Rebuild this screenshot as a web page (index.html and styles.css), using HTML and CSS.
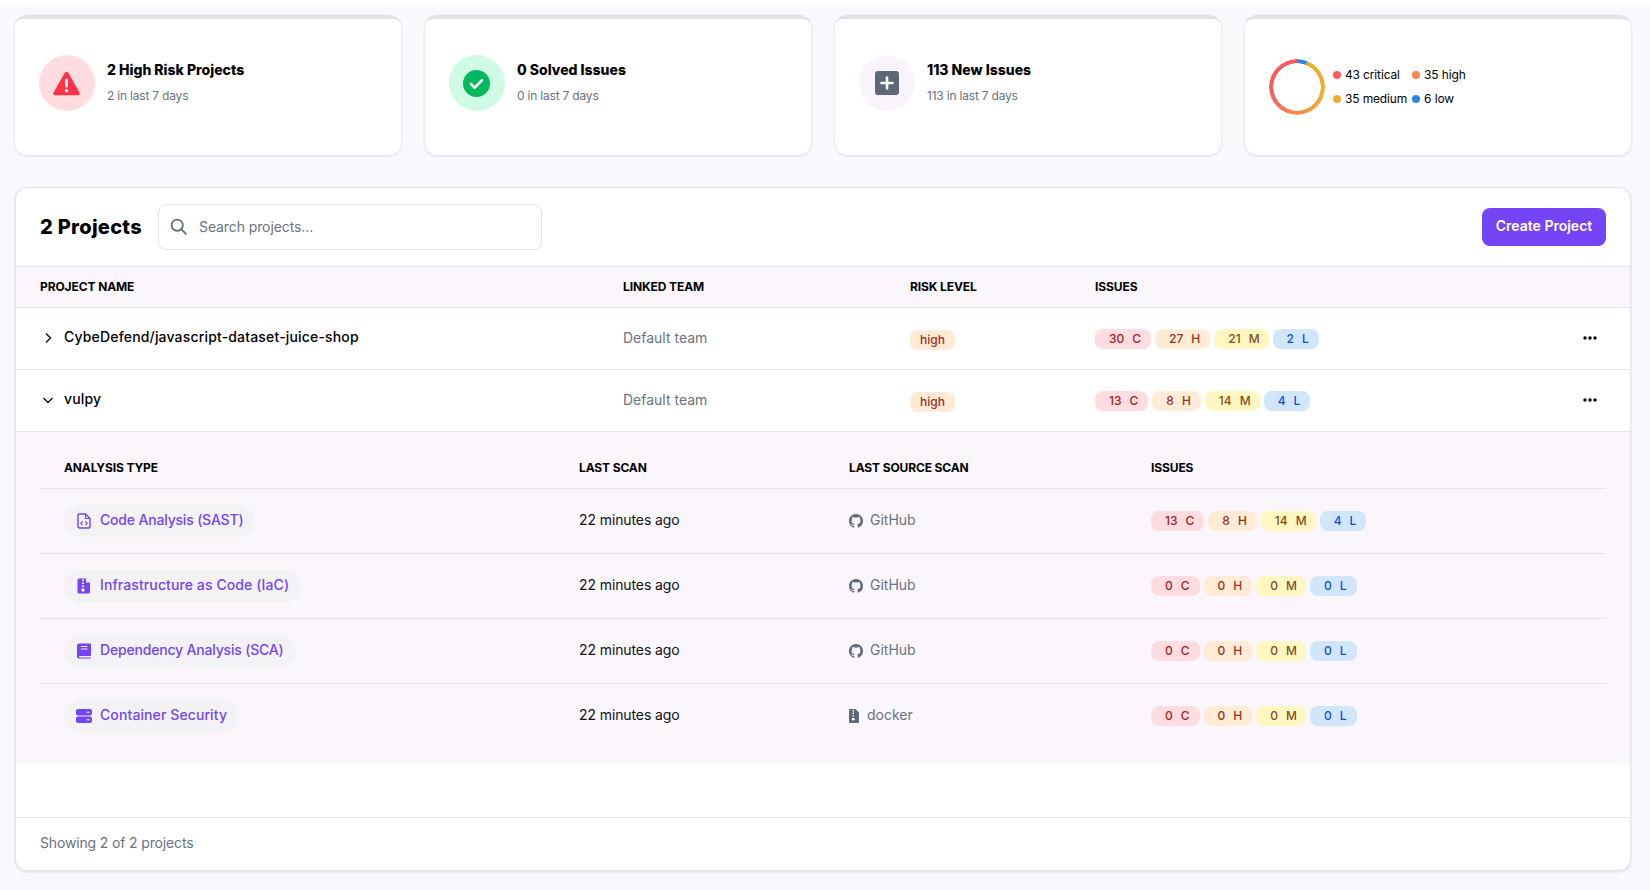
FILE: index.html
```html
<!DOCTYPE html>
<html lang="en">
<head>
<meta charset="utf-8">
<title>Projects</title>
<link rel="stylesheet" href="styles.css">
</head>
<body>
<div class="topband"></div>
<main class="page">
  <section class="stats">
    <article class="stat"><div class="stat-inner">
      <div class="halo halo-red">
        <svg class="ico27" viewBox="0 0 27 24"><path fill="#ff3347" d="M13.500 0.500c.9 0 1.600.5 2 1.200l11 19.200c.8 1.400-.1 2.900-1.700 2.900H2.200C.6 23.800-.3 22.300.5 20.900l11-19.200c.4-.7 1.100-1.200 2-1.200z"/><rect x="12.200" y="7" width="2.600" height="9" rx="1.200" fill="#fff"/><circle cx="13.500" cy="19.200" r="1.600" fill="#fff"/></svg>
      </div>
      <div class="stat-text"><h3>2 High Risk Projects</h3><p>2 in last 7 days</p></div>
    </div></article>
    <article class="stat"><div class="stat-inner">
      <div class="halo halo-green">
        <svg class="ico27" viewBox="0 0 27 27"><circle cx="13.500" cy="13.500" r="13.500" fill="#00b95f"/><path d="M8 14l3.800 3.700L19 10.200" fill="none" stroke="#fff" stroke-width="2.600" stroke-linecap="round" stroke-linejoin="round"/></svg>
      </div>
      <div class="stat-text"><h3>0 Solved Issues</h3><p>0 in last 7 days</p></div>
    </div></article>
    <article class="stat"><div class="stat-inner">
      <div class="halo halo-lilac">
        <svg class="ico24" viewBox="0 0 24 24"><rect width="24" height="24" rx="3" fill="#5d6878"/><path d="M12 6.500v11M6.500 12h11" stroke="#fff" stroke-width="2.600" stroke-linecap="round"/></svg>
      </div>
      <div class="stat-text"><h3>113 New Issues</h3><p>113 in last 7 days</p></div>
    </div></article>
    <article class="stat"><div class="stat-inner stat-chart">
      <div class="donut"></div>
      <ul class="legend">
        <li><i class="dot d-c"></i>43 critical</li>
        <li><i class="dot d-h"></i>35 high</li>
        <li><i class="dot d-m"></i>35 medium</li>
        <li><i class="dot d-l"></i>6 low</li>
      </ul>
    </div></article>
  </section>

  <section class="panel">
    <header class="panel-head">
      <h2>2 Projects</h2>
      <label class="search">
        <svg class="ico-search" viewBox="0 0 16 16"><circle cx="6.800" cy="6.800" r="5.300" fill="none" stroke="#5d6878" stroke-width="1.600"/><path d="M10.800 10.800L15 15" stroke="#5d6878" stroke-width="1.600" stroke-linecap="round"/></svg>
        <span>Search projects...</span>
      </label>
      <button class="create">Create Project</button>
    </header>

    <div class="main-row table-head">
      <div>Project name</div><div>Linked team</div><div>Risk level</div><div>Issues</div>
    </div>

    <div class="main-row project">
      <div class="name"><svg class="chev" viewBox="0 0 12 12"><path d="M4 1.500L8.500 6 4 10.500" fill="none" stroke="#111" stroke-width="1.400"/></svg>CybeDefend/javascript-dataset-juice-shop</div>
      <div class="team">Default team</div>
      <div><span class="risk">high</span></div>
      <div class="issues-cell">
        <div class="badges"><span class="b b-c">30<i>C</i></span><span class="b b-h">27<i>H</i></span><span class="b b-m">21<i>M</i></span><span class="b b-l">2<i>L</i></span></div>
        <svg class="kebab" viewBox="0 0 14 4"><circle cx="2" cy="2" r="1.700"/><circle cx="7" cy="2" r="1.700"/><circle cx="12" cy="2" r="1.700"/></svg>
      </div>
    </div>

    <div class="main-row project">
      <div class="name"><svg class="chev" viewBox="0 0 12 12"><path d="M1.500 4L6 8.500 10.500 4" fill="none" stroke="#111" stroke-width="1.400"/></svg>vulpy</div>
      <div class="team">Default team</div>
      <div><span class="risk">high</span></div>
      <div class="issues-cell">
        <div class="badges"><span class="b b-c">13<i>C</i></span><span class="b b-h">8<i>H</i></span><span class="b b-m">14<i>M</i></span><span class="b b-l">4<i>L</i></span></div>
        <svg class="kebab" viewBox="0 0 14 4"><circle cx="2" cy="2" r="1.700"/><circle cx="7" cy="2" r="1.700"/><circle cx="12" cy="2" r="1.700"/></svg>
      </div>
    </div>

    <div class="sub">
      <div class="sub-row sub-head">
        <div class="first">Analysis type</div><div>Last scan</div><div>Last source scan</div><div>Issues</div>
      </div>

      <div class="sub-row">
        <div class="first"><a class="pill"><svg class="ico16" viewBox="0 0 14 16"><path d="M2.500 1h6L13 5.500V13.500a1.500 1.500 0 0 1-1.500 1.500h-9A1.500 1.500 0 0 1 1 13.500v-11A1.500 1.500 0 0 1 2.500 1z" fill="none" stroke="#7444f5" stroke-width="1.400"/><path d="M8.500 1v4.500H13" fill="none" stroke="#7444f5" stroke-width="1.200"/><path d="M5.600 8.500L3.800 10.300l1.800 1.800M8.400 8.500l1.800 1.800-1.800 1.800" fill="none" stroke="#7444f5" stroke-width="1.100"/></svg><span class="pill-text">Code Analysis (SAST)</span></a></div>
        <div class="scan">22 minutes ago</div>
        <div class="source"><svg class="gh" viewBox="0 0 16 16"><path d="M8 0C3.580 0 0 3.580 0 8c0 3.540 2.290 6.530 5.470 7.590.4.070.55-.17.55-.38 0-.19-.01-.82-.01-1.490-2.010.37-2.530-.49-2.690-.94-.09-.23-.48-.94-.82-1.130-.28-.15-.68-.52-.01-.53.63-.01 1.080.58 1.230.82.72 1.210 1.870.87 2.330.66.070-.52.28-.87.51-1.070-1.780-.2-3.640-.89-3.640-3.950 0-.87.31-1.590.82-2.150-.08-.2-.36-1.020.08-2.120 0 0 .67-.21 2.200.82.64-.18 1.320-.27 2-.27.68 0 1.360.09 2 .27 1.530-1.040 2.200-.82 2.200-.82.44 1.100.16 1.920.08 2.120.51.56.82 1.270.82 2.150 0 3.070-1.870 3.750-3.650 3.950.29.25.54.73.54 1.480 0 1.070-.01 1.930-.01 2.200 0 .21.15.46.55.38A8.013 8.013 0 0 0 16 8c0-4.420-3.580-8-8-8z"/></svg>GitHub</div>
        <div class="badges"><span class="b b-c">13<i>C</i></span><span class="b b-h">8<i>H</i></span><span class="b b-m">14<i>M</i></span><span class="b b-l">4<i>L</i></span></div>
      </div>

      <div class="sub-row">
        <div class="first"><a class="pill"><svg class="ico16" viewBox="0 0 14 16"><path d="M2 0.500h7L13 4.500V14a1.500 1.500 0 0 1-1.500 1.500h-9.500A1.500 1.500 0 0 1 0.500 14V2A1.500 1.500 0 0 1 2 0.500z" fill="#7444f5"/><path d="M9 0.500V4.500h4" fill="#f3f3f5"/><path d="M5 1.500h2v1.500H5zM5 4.500h2V6H5zM5 7.500h2V9H5z" fill="#f3f3f5"/><circle cx="6" cy="12" r="1.700" fill="#f3f3f5"/></svg><span class="pill-text wide">Infrastructure as Code (IaC)</span></a></div>
        <div class="scan">22 minutes ago</div>
        <div class="source"><svg class="gh" viewBox="0 0 16 16"><path d="M8 0C3.580 0 0 3.580 0 8c0 3.540 2.290 6.530 5.470 7.590.4.070.55-.17.55-.38 0-.19-.01-.82-.01-1.490-2.010.37-2.530-.49-2.690-.94-.09-.23-.48-.94-.82-1.130-.28-.15-.68-.52-.01-.53.63-.01 1.080.58 1.230.82.72 1.210 1.870.87 2.330.66.070-.52.28-.87.51-1.070-1.780-.2-3.640-.89-3.640-3.950 0-.87.31-1.590.82-2.150-.08-.2-.36-1.020.08-2.120 0 0 .67-.21 2.200.82.64-.18 1.320-.27 2-.27.68 0 1.360.09 2 .27 1.530-1.040 2.200-.82 2.200-.82.44 1.100.16 1.920.08 2.120.51.56.82 1.270.82 2.150 0 3.070-1.870 3.750-3.650 3.950.29.25.54.73.54 1.480 0 1.070-.01 1.930-.01 2.200 0 .21.15.46.55.38A8.013 8.013 0 0 0 16 8c0-4.420-3.580-8-8-8z"/></svg>GitHub</div>
        <div class="badges"><span class="b b-c">0<i>C</i></span><span class="b b-h">0<i>H</i></span><span class="b b-m">0<i>M</i></span><span class="b b-l">0<i>L</i></span></div>
      </div>

      <div class="sub-row">
        <div class="first"><a class="pill"><svg class="ico16" viewBox="0 0 16 16"><path d="M3 0.500h11a1 1 0 0 1 1 1V12a1 1 0 0 1-1 1H3.500a1 1 0 0 0 0 1.500H15v1H3A2 2 0 0 1 1 13.500V2.500a2 2 0 0 1 2-2z" fill="#7444f5"/><path d="M5 3.500h6.500M5 6h6.500" stroke="#f3f3f5" stroke-width="1.100"/></svg><span class="pill-text">Dependency Analysis (SCA)</span></a></div>
        <div class="scan">22 minutes ago</div>
        <div class="source"><svg class="gh" viewBox="0 0 16 16"><path d="M8 0C3.580 0 0 3.580 0 8c0 3.540 2.290 6.530 5.470 7.590.4.070.55-.17.55-.38 0-.19-.01-.82-.01-1.490-2.010.37-2.530-.49-2.690-.94-.09-.23-.48-.94-.82-1.130-.28-.15-.68-.52-.01-.53.63-.01 1.080.58 1.230.82.72 1.210 1.870.87 2.330.66.070-.52.28-.87.51-1.070-1.780-.2-3.640-.89-3.640-3.950 0-.87.31-1.590.82-2.150-.08-.2-.36-1.020.08-2.120 0 0 .67-.21 2.200.82.64-.18 1.320-.27 2-.27.68 0 1.360.09 2 .27 1.530-1.040 2.200-.82 2.200-.82.44 1.100.16 1.920.08 2.120.51.56.82 1.270.82 2.150 0 3.070-1.870 3.750-3.650 3.950.29.25.54.73.54 1.480 0 1.070-.01 1.930-.01 2.200 0 .21.15.46.55.38A8.013 8.013 0 0 0 16 8c0-4.420-3.580-8-8-8z"/></svg>GitHub</div>
        <div class="badges"><span class="b b-c">0<i>C</i></span><span class="b b-h">0<i>H</i></span><span class="b b-m">0<i>M</i></span><span class="b b-l">0<i>L</i></span></div>
      </div>

      <div class="sub-row last">
        <div class="first"><a class="pill"><svg class="ico16" viewBox="0 0 16 16"><rect y="1" width="16" height="6.400" rx="2" fill="#7444f5"/><rect y="8.600" width="16" height="6.400" rx="2" fill="#7444f5"/><path d="M10.500 4.200h3M10.500 11.800h3" stroke="#f3f3f5" stroke-width="1.100"/></svg><span class="pill-text wide">Container Security</span></a></div>
        <div class="scan">22 minutes ago</div>
        <div class="source"><svg class="zip" viewBox="0 0 10 14"><path d="M1 0h5.500L10 3.500V13a1 1 0 0 1-1 1H1a1 1 0 0 1-1-1V1a1 1 0 0 1 1-1z" fill="#5d6878"/><path d="M3.500 1h1.500v1.500H3.500zM3.500 3.500h1.500V5H3.500zM3.500 6h1.500v1.500H3.500z" fill="#faf8fc"/><circle cx="4.300" cy="10.200" r="1.400" fill="#faf8fc"/></svg>docker</div>
        <div class="badges"><span class="b b-c">0<i>C</i></span><span class="b b-h">0<i>H</i></span><span class="b b-m">0<i>M</i></span><span class="b b-l">0<i>L</i></span></div>
      </div>
    </div>

    <div class="spacer"></div>
    <footer class="panel-foot">Showing 2 of 2 projects</footer>
  </section>
</main>
</body>
</html>
```
FILE: styles.css
```css
* { box-sizing: border-box; }
html, body { margin: 0; padding: 0; }
body {
  background: #faf8fc;
  font-family: "Inter", "Liberation Sans", sans-serif;
  font-size: 14px;
  color: #000;
  overflow: hidden;
}
.topband { height: 7px; background: #fff; }
.page { padding: 8px 19px 19px 15px; }

/* stat cards */
.stats { display: grid; grid-template-columns: repeat(4, 386px); gap: 24px; }
.stat {
  height: 140px;
  background: #e1e1e8;
  border-radius: 12px;
  padding-top: 4px;
  box-shadow: 0 1px 3px rgba(30, 30, 60, .14);
}
.stat-inner {
  height: 136px;
  background: #fff;
  border-radius: 8px 8px 12px 12px;
  padding: 36px 24px 0;
  display: flex;
  gap: 12px;
}
.halo {
  width: 56px; height: 56px;
  border-radius: 50%;
  display: flex; align-items: center; justify-content: center;
  flex: none;
}
.halo-red { background: #ffdcdf; }
.halo-green { background: #cffae4; }
.halo-lilac { background: #f9f4fb; }
.ico27 { width: 27px; height: 27px; display: block; margin-left: -1px; }
.ico24 { width: 24px; height: 24px; display: block; }
.stat-text { padding-top: 6px; }
.stat-text h3 {
  margin: 0;
  font-size: 14px; line-height: 18px; font-weight: 800;
  letter-spacing: 0;
}
.stat-text p {
  margin: 8px 0 0;
  font-size: 12px; line-height: 18px; color: #6b7280;
  letter-spacing: -.2px;
}
.stat-chart { padding-top: 40px; gap: 8px; padding-left: 24px; }
.donut {
  width: 56px; height: 56px;
  border-radius: 50%;
  flex: none;
  background: conic-gradient(#2f86e0 0 6%, #f2ad2e 6% 30%, #ff8a4a 50%, #ff5a5a 72%, #ff5a5a 100%);
  -webkit-mask: radial-gradient(circle, transparent 23.500px, #000 24px);
  mask: radial-gradient(circle, transparent 23.500px, #000 24px);
}
.legend {
  list-style: none; margin: 4px 0 0; padding: 0;
  display: grid;
  grid-template-columns: auto auto;
  grid-auto-rows: 24px;
  column-gap: 5px;
  font-size: 12px; line-height: 24px;
  letter-spacing: -.15px;
}
.legend li { display: flex; align-items: center; gap: 4px; white-space: nowrap; }
.dot { width: 8px; height: 8px; border-radius: 50%; flex: none; }
.d-c { background: #ff5a5a; }
.d-h { background: #ff8450; }
.d-m { background: #f2ad2e; }
.d-l { background: #2f86e0; }

/* panel */
.panel {
  width: 1616px;
  margin-top: 32px;
  background: #fff;
  border: 1px solid #e3e3ea;
  border-radius: 12px;
  overflow: hidden;
  box-shadow: 0 1px 3px rgba(30, 30, 60, .12);
}
.panel-head {
  height: 79px;
  padding: 0 24px;
  display: flex; align-items: center;
  border-bottom: 1px solid #e3e3ea;
}
.panel-head h2 {
  margin: 0;
  font-size: 20px; font-weight: 800; line-height: 24px;
  letter-spacing: .3px;
  width: 118px;
  white-space: nowrap;
}
.search {
  width: 384px; height: 46px;
  border: 1px solid #e3e3ea;
  border-radius: 8px;
  display: flex; align-items: center;
  padding-left: 11px;
  gap: 12px;
  color: #6b7280;
  margin-top: -1px;
  letter-spacing: -.1px;
}
.search span { position: relative; top: -.5px; }
.ico-search { width: 17px; height: 17px; flex: none; }
.create {
  margin-left: auto;
  height: 38px; width: 124px;
  border: 0; border-radius: 8px;
  background: #7444f5;
  color: #fff;
  font: 600 14px/36px "Inter", "Liberation Sans", sans-serif;
  padding: 0 0 2px;
  white-space: nowrap;
  margin-top: -1px;
}
.main-row {
  display: grid;
  grid-template-columns: 583px 287px 185px 1fr;
  align-items: center;
  padding: 0 24px;
  border-bottom: 1px solid #e3e3ea;
}
.table-head {
  height: 41px;
  background: #faf6fc;
  font-size: 12px; font-weight: 700;
  text-transform: uppercase;
  letter-spacing: -.1px;
  padding-bottom: 2px;
}
.project { height: 62px; }
.name {
  display: flex; align-items: center; gap: 10px;
  font-weight: 500;
  margin-top: -4px;
  white-space: nowrap;
  letter-spacing: .17px;
}
.name .chev { margin-top: 2px; }
.team { color: #6b7280; margin-top: -2px; }
.chev { width: 12px; height: 12px; margin-left: 2px; flex: none; }
.risk {
  display: inline-block;
  height: 20px; padding: 0 10px;
  border-radius: 8px;
  background: #ffead5;
  color: #9b2c1c;
  font-size: 12px; font-weight: 500; line-height: 20px;
  vertical-align: middle;
  position: relative; top: 1px;
}
.issues-cell { display: flex; align-items: center; justify-content: space-between; padding-right: 1px; }
.kebab { width: 14px; height: 4px; fill: #000; margin-right: 8px; margin-top: -2px; }
.badges { display: flex; gap: 4px; }
.b {
  display: inline-flex; align-items: center; justify-content: center;
  height: 20px; padding: 0 10px 0 14px;
  border-radius: 8px;
  font-size: 12px; font-weight: 500; line-height: 20px;
  gap: 8px;
  white-space: nowrap;
}
.b i { font-style: normal; }
.b-c { background: #ffdcdf; color: #a81e22; }
.b-h { background: #ffebd6; color: #9c2f1a; }
.b-m { background: #fff7c2; color: #854d16; padding-right: 9px; }
.b-l { background: #d1e6fb; color: #0c4fd8; }

/* expanded area */
.sub { background: #faf6fc; padding: 0 24px 16px; }
.sub-row {
  display: grid;
  grid-template-columns: 539px 270px 302px 1fr;
  align-items: center;
  height: 65px;
  border-bottom: 1px solid #e3e3ea;
}
.sub-row .first { padding-left: 24px; }
.sub-row.last { border-bottom: 0; height: 64px; }
.sub-head {
  height: 57px;
  padding-top: 14px;
  font-size: 12px; font-weight: 700;
  text-transform: uppercase;
  letter-spacing: -.12px;
}
.pill {
  display: inline-flex; align-items: center; gap: 6px;
  height: 32px; padding: 0 12px 0 10px;
  border-radius: 16px;
  background: #f3f3f5;
  color: #7444f5;
  font-weight: 500;
  white-space: nowrap;
  letter-spacing: -.18px;
}
.pill-text { position: relative; top: -1.500px; }
.pill-text.wide { letter-spacing: .1px; }
.scan { color: #111; letter-spacing: -.1px; margin-top: -3px; }
.source { display: flex; align-items: center; color: #6b7280; margin-top: -3px; }
.ico16 { width: 20px; height: 16px; flex: none; }
.gh { width: 14px; height: 14px; margin-right: 7px; fill: #5d6878; flex: none; position: relative; top: 1px; }
.zip { width: 10px; height: 14px; margin-right: 8px; flex: none; position: relative; top: 1px; }
.spacer { height: 53px; }
.panel-foot {
  height: 53px;
  padding: 0 24px 3px;
  border-top: 1px solid #e3e3ea;
  display: flex; align-items: center;
  color: #6b7280;
  letter-spacing: -.15px;
}
```
